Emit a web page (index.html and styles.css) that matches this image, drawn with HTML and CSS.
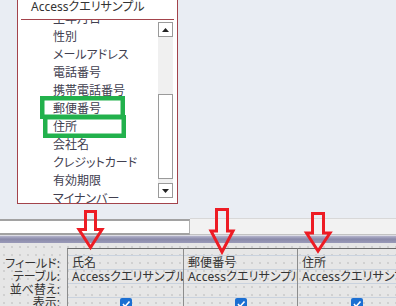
FILE: index.html
```html
<!DOCTYPE html>
<html lang="ja">
<head>
<meta charset="utf-8">
<title>クエリデザイン</title>
<link rel="stylesheet" href="styles.css">
</head>
<body>
<div class="page">
  <div class="top">
    <div class="field-list">
      <div class="title">Accessクエリサンプル</div>
      <div class="list-wrap">
        <ul class="list">
          <li>生年月日</li>
          <li>性別</li>
          <li>メールアドレス</li>
          <li>電話番号</li>
          <li>携帯電話番号</li>
          <li>郵便番号</li>
          <li>住所</li>
          <li>会社名</li>
          <li>クレジットカード</li>
          <li>有効期限</li>
          <li>マイナンバー</li>
        </ul>
        <div class="scrollbar">
          <div class="sb-btn"><svg width="7" height="4" viewBox="0 0 7 4"><path d="M0 4 L3.5 0 L7 4 Z" fill="#222"/></svg></div>
          <div class="sb-track sb-track-top"></div>
          <div class="sb-thumb"></div>
          <div class="sb-track sb-track-bottom"></div>
          <div class="sb-btn"><svg width="7" height="4" viewBox="0 0 7 4"><path d="M0 0 L7 0 L3.5 4 Z" fill="#222"/></svg></div>
        </div>
      </div>
    </div>
  </div>

  <div class="hbar">
    <div class="hbar-field"></div>
    <div class="hbar-rest"></div>
  </div>
  <div class="splitter"></div>

  <div class="grid-area">
    <div class="labels">
      <div class="label label-sel"></div>
      <div class="label">フィールド:</div>
      <div class="label">テーブル:</div>
      <div class="label">並べ替え:</div>
      <div class="label">表示:</div>
    </div>
    <div class="qcol qcol-1">
      <div class="cell sel"></div>
      <div class="cell">氏名</div>
      <div class="cell">Accessクエリサンプル</div>
      <div class="cell"></div>
      <div class="cell chk"><span class="checkbox"><svg width="12" height="12" viewBox="0 0 12 12"><path d="M3 6 L5 8.5 L9.5 3.5" stroke="#fff" stroke-width="1.6" fill="none"/></svg></span></div>
    </div>
    <div class="qcol qcol-2">
      <div class="cell sel"></div>
      <div class="cell">郵便番号</div>
      <div class="cell">Accessクエリサンプル</div>
      <div class="cell"></div>
      <div class="cell chk"><span class="checkbox"><svg width="12" height="12" viewBox="0 0 12 12"><path d="M3 6 L5 8.5 L9.5 3.5" stroke="#fff" stroke-width="1.6" fill="none"/></svg></span></div>
    </div>
    <div class="qcol qcol-3">
      <div class="cell sel"></div>
      <div class="cell">住所</div>
      <div class="cell">Accessクエリサンプル</div>
      <div class="cell"></div>
      <div class="cell chk"><span class="checkbox"><svg width="12" height="12" viewBox="0 0 12 12"><path d="M3 6 L5 8.5 L9.5 3.5" stroke="#fff" stroke-width="1.6" fill="none"/></svg></span></div>
    </div>
  </div>

  <svg class="marks" width="396" height="306" viewBox="0 0 396 306">
    <g fill="none" stroke="#ed1c24" stroke-width="3" stroke-linejoin="miter">
      <path d="M85.5 211.5 H95.5 V229.5 H102 L90.5 247.5 L79 229.5 H85.5 Z"/>
      <path d="M216.5 209.5 H227.5 V231 H233 L222 252 L211 231 H216.5 Z"/>
      <path d="M312.5 213.5 H323.5 V233 H330 L318 251 L306.5 233 H312.5 Z"/>
    </g>
    <g fill="none" stroke="#22b14c" stroke-width="4.5">
      <rect x="42.25" y="98.25" width="80.5" height="18.5"/>
      <rect x="45.25" y="117.25" width="78.5" height="18.5"/>
    </g>
  </svg>
</div>
</body>
</html>
```

FILE: styles.css
```css
* { box-sizing: border-box; }

html, body {
  margin: 0;
  padding: 0;
}

body {
  width: 396px;
  height: 306px;
  overflow: hidden;
  background: #e9edf3;
  font-family: "Noto Sans", "Noto Sans CJK JP", sans-serif;
  font-size: 12px;
  color: #333;
}

.page {
  position: relative;
  width: 396px;
  height: 306px;
  overflow: hidden;
}

.top {
  display: flex;
  align-items: flex-start;
  height: 218px;
  padding-left: 17px;
}

.field-list {
  width: 161px;
  margin-top: -8px;
  border: 1px solid #a3434b;
  background: #fff;
}

.title {
  height: 27px;
  line-height: 27px;
  margin: 0 3px;
  padding-left: 10px;
  border-bottom: 1px solid #a3434b;
  font-feature-settings: "palt";
  color: #333;
  white-space: nowrap;
}

.list-wrap {
  display: flex;
  height: 183px;
}

.list {
  flex: 1;
  list-style: none;
  margin: 0;
  padding: 0 0 0 35px;
  overflow: hidden;
  font-feature-settings: "palt";
  color: #414050;
}

.list li {
  height: 18px;
  line-height: 18px;
  white-space: nowrap;
}

.list li:first-child {
  margin-top: -10px;
}

.scrollbar {
  width: 15px;
  margin-right: 4px;
  padding-top: 2px;
  display: flex;
  flex-direction: column;
}

.sb-btn {
  height: 15px;
  border: 1px solid #9a9a9a;
  background: #fff;
  display: flex;
  align-items: center;
  justify-content: center;
}

.sb-btn svg { display: block; }

.sb-track {
  background: #f0f0f0;
}

.sb-track-top { height: 57px; }
.sb-track-bottom { height: 4px; }

.sb-thumb {
  height: 85px;
  border: 1px solid #9a9a9a;
  background: #fff;
}

.hbar {
  display: flex;
  height: 17px;
}

.hbar-field {
  width: 190px;
  background: #fff;
  border-top: 2px solid #a2a2a2;
  border-bottom: 2px solid #a2a2a2;
  border-right: 1px solid #b0b0b0;
  margin-top: 1px;
}

.hbar-rest {
  flex: 1;
  background: #f2f2f2;
  border-top: 1px solid #d8d8d8;
  border-bottom: 1px solid #c2c2c2;
}

.splitter {
  height: 8px;
  border-top: 1px solid #dcdce4;
  background: linear-gradient(#b4b4cc, #8a8aaa 45%, #9a9ab8);
}

.grid-area {
  display: flex;
  height: 63px;
  padding-top: 5px;
  overflow: hidden;
  background-color: #e6e6e6;
  background-image: radial-gradient(circle, #cfcfcf 0.7px, transparent 1.1px);
  background-size: 8px 8px;
}

.labels {
  flex: none;
  width: 67px;
  padding-right: 7px;
  text-align: right;
  color: #333;
  white-space: nowrap;
  font-feature-settings: "palt";
}

.label {
  height: 13px;
  line-height: 13px;
  font-size: 12px;
}

.label-sel {
  height: 9px;
}

.qcol {
  border-left: 1px solid #8c8c8c;
  border-top: 1px solid #6a6a6a;
  flex: none;
}

.qcol-1 { width: 116px; }
.qcol-2 { width: 114px; }
.qcol-3 { width: 118px; }

.cell {
  height: 14px;
  line-height: 13px;
  padding-left: 4px;
  border-bottom: 1px solid #c9d2de;
  white-space: nowrap;
  overflow: hidden;
  color: #333;
  font-size: 12px;
  font-feature-settings: "palt";
  letter-spacing: 0.1px;
}

.cell.sel {
  height: 7px;
}

.cell.chk {
  border-bottom: none;
  padding-left: 0;
  display: flex;
  justify-content: center;
}

.checkbox {
  width: 12px;
  height: 12px;
  border-radius: 2px;
  background: #1b6fd2;
  display: block;
  margin-left: 1px;
}

.checkbox svg { display: block; }

.marks {
  position: absolute;
  left: 0;
  top: 0;
  pointer-events: none;
}
```
